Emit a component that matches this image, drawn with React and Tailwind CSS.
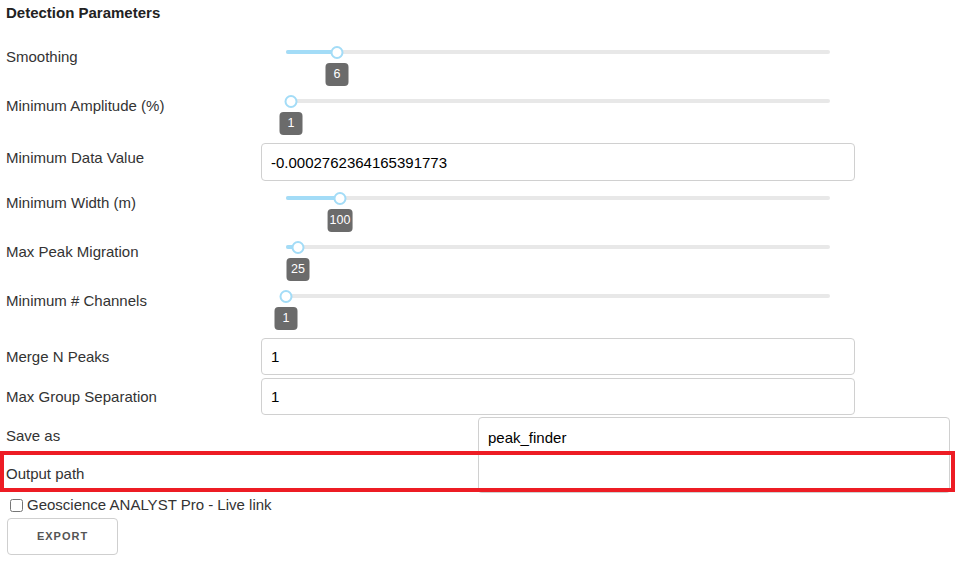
import React from 'react';

const SliderRow = ({ label, value, offset }) => {
    return (
        <div className="flex h-[49px]">
            <div className="w-[261px] shrink-0 pl-[6px] pt-[15px] leading-[20px]">{label}</div>
            <div className="pl-[25px] pt-[18px]">
                <div className="relative h-[4px] w-[544px] rounded-full bg-[#e8e8e8]">
                    {/* filled part */}
                    <div className="absolute left-0 top-0 h-[4px] rounded-full bg-[#a3dcf7]" style={{ width: offset }}></div>
                    {/* thumb */}
                    <div
                        className="absolute top-[-4.5px] h-[13px] w-[13px] -translate-x-1/2 rounded-full border-2 border-[#a3dcf7] bg-white"
                        style={{ left: offset }}
                    ></div>
                    {/* value badge */}
                    <div
                        className="absolute top-[13px] flex h-[23px] min-w-[23px] -translate-x-1/2 items-center justify-center rounded-[4px] bg-[#6b6b6b] px-[2px] text-[12.5px] leading-none text-white"
                        style={{ left: offset }}
                    >
                        {value}
                    </div>
                </div>
            </div>
        </div>
    );
};

const inputCls = 'h-full w-full rounded-[4px] border border-[#d0d0d0] bg-white pl-[9px] text-[15px] text-black outline-none';

export default function App() {
    return (
        <div className="h-[563px] w-[959px] overflow-hidden bg-white font-['Liberation_Sans',Arial,sans-serif] text-[15px] text-[#333]">
            <div className="h-[32px] pl-[6px] pt-[3px] text-[15px] font-bold leading-[20px] text-[#222]">Detection Parameters</div>

            <SliderRow label="Smoothing" value="6" offset={51} />
            <SliderRow label="Minimum Amplitude (%)" value="1" offset={5} />

            <div className="flex h-[48px]">
                <div className="w-[261px] shrink-0 pl-[6px] pt-[18px] leading-[20px]">Minimum Data Value</div>
                <div className="mt-[13px] h-[38px] w-[594px]">
                    <input className={inputCls} defaultValue="-0.0002762364165391773" />
                </div>
            </div>

            <SliderRow label="Minimum Width (m)" value="100" offset={54} />
            <SliderRow label="Max Peak Migration" value="25" offset={12} />
            <SliderRow label="Minimum # Channels" value="1" offset={0} />

            <div className="flex h-[51px]">
                <div className="w-[261px] shrink-0 pl-[6px] pt-[22px] leading-[20px]">Merge N Peaks</div>
                <div className="mt-[13px] h-[37px] w-[594px]">
                    <input className={inputCls} defaultValue="1" />
                </div>
            </div>

            <div className="flex h-[39px]">
                <div className="w-[261px] shrink-0 pl-[6px] pt-[11px] leading-[20px]">Max Group Separation</div>
                <div className="mt-[2px] h-[37px] w-[594px]">
                    <input className={inputCls} defaultValue="1" />
                </div>
            </div>

            <div className="flex h-[40px]">
                <div className="w-[478px] shrink-0 pl-[6px] pt-[11px] leading-[20px]">Save as</div>
                <div className="mt-[2px] h-[40px] w-[472px]">
                    <input className={inputCls} defaultValue="peak_finder" />
                </div>
            </div>

            <div className="relative flex h-[38px]">
                <div className="w-[478px] shrink-0 pl-[6px] pt-[9px] leading-[20px]">Output path</div>
                <div className="h-[38px] w-[472px]">
                    <input className={`${inputCls} rounded-t-none border-t-0`} defaultValue="" />
                </div>
                {/* highlight annotation */}
                <div className="pointer-events-none absolute left-0 top-[-4px] h-[41px] w-[955px] border-[4px] border-[#ed1c24]"></div>
            </div>

            <div className="flex h-[24px] items-center pl-[10px]">
                <input type="checkbox" className="m-0 h-[13px] w-[13px]" />
                <span className="pl-[4px] leading-[20px]">Geoscience ANALYST Pro - Live link</span>
            </div>

            <div className="pl-[7px] pt-[1px]">
                <button className="h-[37px] w-[111px] rounded-[4px] border border-[#cfcfcf] bg-white text-[11px] font-bold tracking-[1px] text-[#555]">
                    EXPORT
                </button>
            </div>
        </div>
    );
}
